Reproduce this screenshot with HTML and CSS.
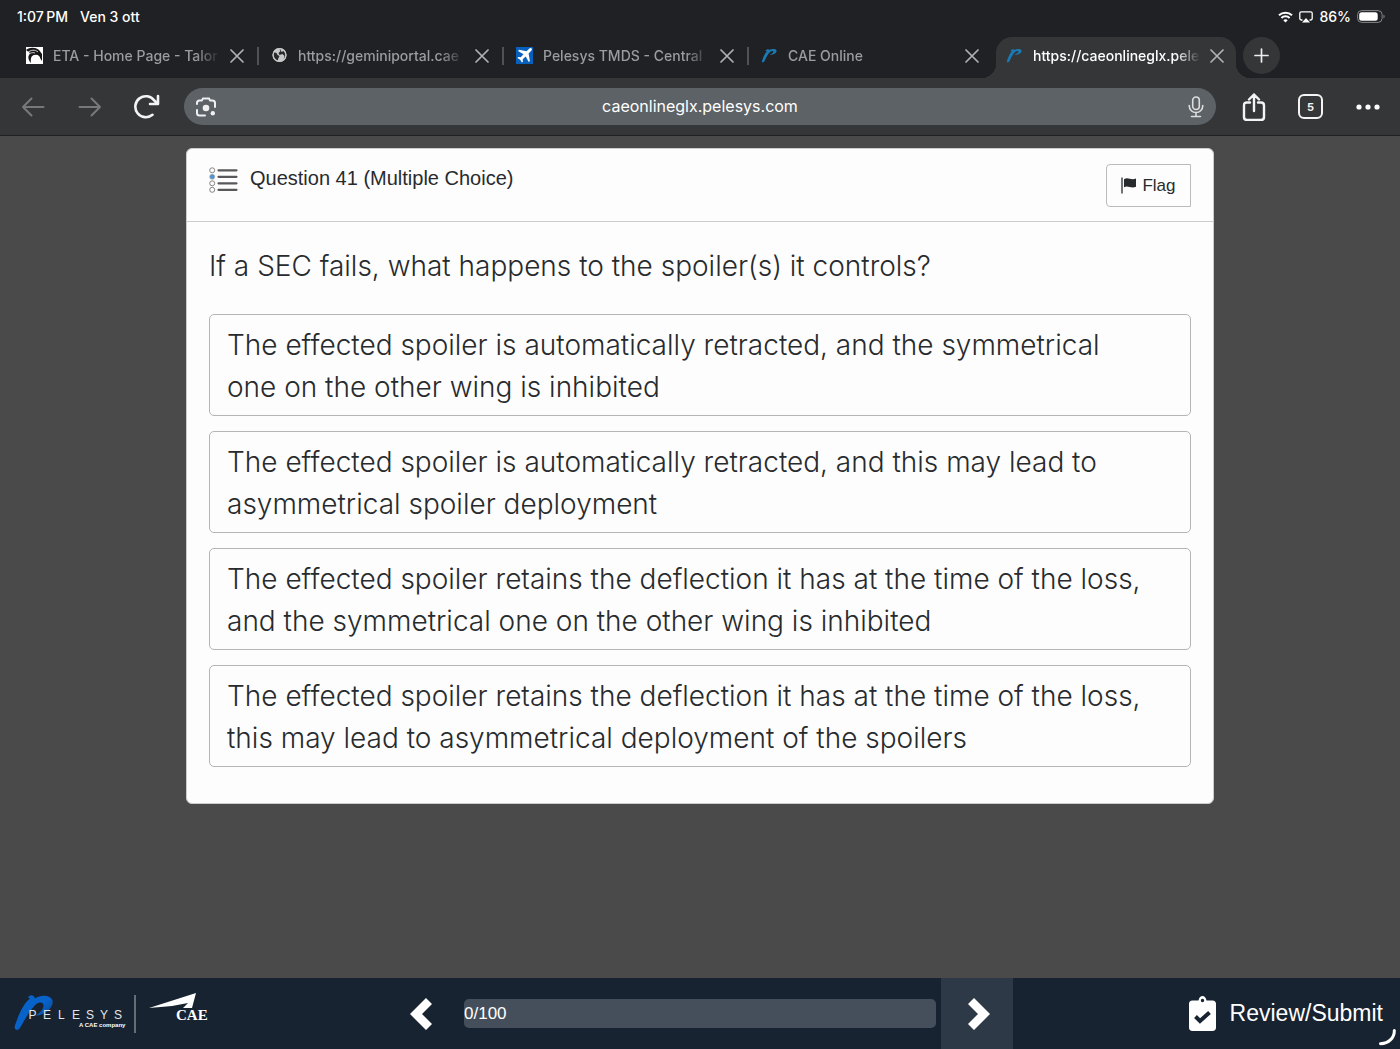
FILE: index.html
```html
<!DOCTYPE html>
<html lang="en">
<head>
<meta charset="utf-8">
<meta name="viewport" content="width=device-width, initial-scale=1">
<title>CAE Online</title>
<link rel="stylesheet" href="styles.css">
</head>
<body>
<svg class="defs" width="0" height="0" aria-hidden="true">
  <symbol id="close" viewBox="0 0 14 14"><path d="M1 1l12 12M13 1L1 13" fill="none" stroke="currentColor" stroke-width="1.7" stroke-linecap="round"/></symbol>
  <symbol id="swoosh" viewBox="0 0 18 18"><path d="M.8 15.500C2 11.500 3.800 7 6.300 4.500l-1.800-.3C6 2 8.500 2 9 3.200 11.500 1.700 16.400 1.500 16.500 4.200c0 2.700-4.500 4.500-8 4 2.800-.8 4.800-2.300 4.600-3.400-.4-1-2.200-.4-3.600.6C7.300 7.500 5.400 11.500 4 14.600c-.6 1.500-2.700 2.300-3.200.9z" fill="#1b79b3"/></symbol>
</svg>

<header class="browser">
  <div class="status">
    <span>1:07&#8201;PM</span>
    <span>Ven 3 ott</span>
    <div class="status-right">
      <svg width="15" height="12" viewBox="0 0 15 12" aria-hidden="true"><g fill="none" stroke="#fff" stroke-width="2"><path d="M1 4.300a9.300 9.300 0 0 1 13 0"/><path d="M3.400 7a5.800 5.800 0 0 1 8.200 0"/></g><path d="M7.500 11.500L5.300 9.200a3.200 3.200 0 0 1 4.400 0z" fill="#fff"/></svg>
      <svg width="14" height="12" viewBox="0 0 14 12" aria-hidden="true"><path d="M3.500 9H2.200C1.300 9 .8 8.500.8 7.600V2.200C.8 1.300 1.300.8 2.200.8h9.600c.9 0 1.400.5 1.400 1.400v5.400c0 .9-.5 1.400-1.400 1.400h-1.300" fill="none" stroke="#fff" stroke-width="1.300"/><path d="M7 7l4 4.600H3z" fill="#fff"/></svg>
      <span>86%</span>
      <svg width="28" height="13" viewBox="0 0 28 13" aria-hidden="true"><rect x=".6" y=".6" width="24.500" height="11.800" rx="4" fill="none" stroke="#85868a"/><rect x="2.200" y="2.200" width="18.500" height="8.600" rx="2.500" fill="#fff"/><path d="M26.500 4.500c1.500.6 1.500 3.400 0 4z" fill="#85868a"/></svg>
    </div>
  </div>

  <nav class="tabs" aria-label="Open tabs">
    <div class="tab">
      <svg width="17" height="17" viewBox="0 0 17 17" aria-hidden="true"><path fill="#fff" d="M0 0h17v17H0z"/><path d="M0 3C4 0 9 0 13 3l3 4v7l-1.500-2C13.500 9 11 7.500 8 8c-3 .8-3.500 4-3 8C2 13 1.500 9 4 6z" fill="#151515"/><path d="M1 6c4-3.500 8-3.500 11-1M1.500 9.500C3 6 6 5 9 6" fill="none" stroke="#fff" stroke-width=".8"/><circle cx="10" cy="12" r="4.300" fill="#fff"/></svg>
      <a href="#">ETA - Home Page - Talor</a>
      <button type="button" aria-label="Close tab"><svg width="14" height="14"><use href="#close"/></svg></button>
    </div>
    <div class="tab">
      <svg width="17" height="17" viewBox="0 0 17 17" aria-hidden="true"><circle cx="8.500" cy="8" r="7" fill="#c8c9cb"/><path d="M2.500 5l3 1 1 2 2 1-1 2-1 3c-3-1-5-5-4-9zM8.500 2l1 2-2 2 1 2 3-1 2 2-1 4c3-2 3-7 0-9l-2 1-1-3z" fill="#28292c"/><circle cx="8.500" cy="8" r="6.400" fill="none" stroke="#c8c9cb" stroke-width="1.300"/></svg>
      <a href="#">https://geminiportal.cae</a>
      <button type="button" aria-label="Close tab"><svg width="14" height="14"><use href="#close"/></svg></button>
    </div>
    <div class="tab">
      <svg width="17" height="17" viewBox="0 0 17 17" aria-hidden="true"><path fill="#0860bd" d="M0 0h17v17H0z"/><path d="M15.500 1.400c-.7-.6-1.800-.2-2.600.6l-2.400 2.300-7.300-1.500L2 4l5.500 3.200-2.800 3-2.400-.2-.9.900 2.800 1.800 1.700 2.900 1-.9-.2-2.500 3-2.700 3 5.600 1.200-1.200-1.300-7.400L15 4.100c.8-.9 1.200-2 .5-2.700z" fill="#fff"/></svg>
      <a href="#">Pelesys TMDS - Central</a>
      <button type="button" aria-label="Close tab"><svg width="14" height="14"><use href="#close"/></svg></button>
    </div>
    <div class="tab last">
      <svg width="17" height="17" aria-hidden="true"><use href="#swoosh"/></svg>
      <a href="#">CAE Online</a>
      <button type="button" aria-label="Close tab"><svg width="14" height="14"><use href="#close"/></svg></button>
    </div>
    <div class="tab active">
      <svg width="17" height="17" aria-hidden="true"><use href="#swoosh"/></svg>
      <a href="#" aria-current="page">https://caeonlineglx.pele</a>
      <button type="button" aria-label="Close tab"><svg width="14" height="14"><use href="#close"/></svg></button>
    </div>
    <button class="new-tab" type="button" aria-label="New tab"><svg width="15" height="15" viewBox="0 0 15 15"><path d="M7.500 1v13M1 7.500h13" stroke="#eee" stroke-width="1.700" stroke-linecap="round"/></svg></button>
  </nav>

  <div class="toolbar">
    <button class="tool dim" type="button" aria-label="Back"><svg width="24" height="20" viewBox="0 0 24 20"><path d="M22.500 10H2M10.500 1.500L2 10l8.500 8.500"/></svg></button>
    <button class="tool dim" type="button" aria-label="Forward"><svg width="24" height="20" viewBox="0 0 24 20"><path d="M1.500 10H22M13.500 1.500L22 10l-8.500 8.500"/></svg></button>
    <button class="tool reload" type="button" aria-label="Reload"><svg width="26" height="26" viewBox="0 0 26 26"><path d="M18.500 20.800A10.500 10.500 0 1 1 20.300 6.500L23.500 9.500M24 2v8h-8"/></svg></button>
    <div class="address">
      <svg width="20" height="20" viewBox="0 0 20 20" aria-hidden="true"><path d="M1 7V6c0-1.500 1-2.500 2.500-2.500h2.300L7 1.500h6l1.200 2h2.300C18 3.500 19 4.500 19 6v4M1 13v3c0 1.500 1 2.500 2.500 2.500H9" fill="none" stroke="#f0f0f0" stroke-width="2" stroke-linecap="round"/><circle cx="10" cy="11" r="3.300" fill="#f0f0f0"/><circle cx="16.800" cy="16.300" r="2.200" fill="#f0f0f0"/></svg>
      <input type="text" aria-label="Address" value="caeonlineglx.pelesys.com">
      <svg width="16" height="22" viewBox="0 0 16 22" aria-hidden="true"><g fill="none" stroke="#ddd" stroke-width="1.600" stroke-linecap="round"><rect x="4.700" y="1" width="6.600" height="12.500" rx="3.300"/><path d="M1.200 9.500c0 9.300 13.600 9.300 13.600 0M8 16.500V20M3.500 20.500h9"/></g></svg>
    </div>
    <button class="tool" type="button" aria-label="Share"><svg width="24" height="28" viewBox="0 0 24 28"><path d="M8 9.500H5C3 9.500 2 10.500 2 12.500V24c0 2 1 3 3 3h14c2 0 3-1 3-3V12.500c0-2-1-3-3-3h-3M12 18V1.500M7 6.500l5-5 5 5"/></svg></button>
    <button class="tool" type="button" aria-label="Tabs"><span class="count">5</span></button>
    <button class="tool" type="button" aria-label="More"><svg class="dots" width="24" height="6" viewBox="0 0 24 6"><circle cx="3" cy="3" r="2.600"/><circle cx="12" cy="3" r="2.600"/><circle cx="21" cy="3" r="2.600"/></svg></button>
  </div>
</header>

<main>
  <section class="card">
    <header class="card-head">
      <svg width="29" height="26" viewBox="0 0 29 26" aria-hidden="true"><g stroke="#58585a" stroke-width="2.200" stroke-linecap="round"><path d="M9.500 3.300h18M9.500 9.800h18M9.500 16.300h18M9.500 22.800h18"/></g><circle cx="3.200" cy="9.800" r="2.300" fill="#4b95dd"/><g fill="none" stroke="#777" stroke-width=".9"><circle cx="3.200" cy="3.300" r="2.500"/><circle cx="3.200" cy="9.800" r="2.500" stroke-opacity=".6"/><circle cx="3.200" cy="16.300" r="2.500"/><circle cx="3.200" cy="22.800" r="2.500"/></g></svg>
      <h1>Question 41 (Multiple Choice)</h1>
      <button class="flag" type="button"><svg width="15" height="17" viewBox="0 0 15 17" aria-hidden="true"><path d="M1 .5v16" stroke="#282b2d" stroke-width="1.300"/><path d="M3 2.300c4-2.800 6.500 1.300 12-.7v8.200c-5 2.200-8-1.600-12 .4z" fill="#282b2d"/></svg>Flag</button>
    </header>
    <div class="card-body">
      <h2>If a SEC fails, what happens to the spoiler(s) it controls?</h2>
      <div class="answers">
        <button type="button">The effected spoiler is automatically retracted, and the symmetrical one on the other wing is inhibited</button>
        <button type="button">The effected spoiler is automatically retracted, and this may lead to asymmetrical spoiler deployment</button>
        <button type="button">The effected spoiler retains the deflection it has at the time of the loss, and the symmetrical one on the other wing is inhibited</button>
        <button type="button">The effected spoiler retains the deflection it has at the time of the loss, this may lead to asymmetrical deployment of the spoilers</button>
      </div>
    </div>
  </section>
</main>

<footer>
  <div class="brand">
    <svg width="210" height="50" viewBox="0 0 210 50" role="img" aria-label="Pelesys, a CAE company">
      <defs><linearGradient id="blue" x1="0" y1="0" x2="1" y2="1"><stop offset="0" stop-color="#0762ca"/><stop offset=".5" stop-color="#0762ca"/><stop offset=".9" stop-color="#123c70"/></linearGradient></defs>
      <path d="M14.500 38C18 27 23 15 30 9.500L28 8.500C30 5 34 6 35 9.500 41 5 51 6 52.500 11.500c1.500 8-9 15.500-17 15 6-3 9.500-9 7.500-12-2-2.500-7-.5-10 4-6 7-9 14-13 20.500-2 3-5 2.500-5.500-1z" fill="url(#blue)"/>
      <g class="letters"><text x="28.500" y="30">P</text><text x="43" y="30">E</text><text x="58" y="30">L</text><text x="72" y="30">E</text><text x="86" y="30">S</text><text x="100" y="30">Y</text><text x="114" y="30">S</text></g>
      <text class="tagline" x="79" y="38">A CAE company</text>
      <path d="M135 6v38" stroke="#81878e" stroke-width="1.500"/>
      <path d="M149 19l47-15-4 15h-9l5-5-16 3z" fill="#fff"/>
      <text class="cae" x="176" y="31">CAE</text>
    </svg>
  </div>
  <nav class="pager" aria-label="Question navigation">
    <button class="prev" type="button" aria-label="Previous"><svg width="22" height="32" viewBox="0 0 22 32"><path d="M16 0l6 6-10 10 10 10-6 6L0 16z"/></svg></button>
    <div class="progress" role="progressbar" aria-label="Answered" aria-valuenow="0" aria-valuemax="100">0/100</div>
    <button class="next" type="button" aria-label="Next"><svg width="22" height="32" viewBox="0 0 22 32"><path d="M6 0L0 6l10 10L0 26l6 6 16-16z"/></svg></button>
  </nav>
  <button class="review" type="button"><svg width="27" height="35" viewBox="0 0 27 35" aria-hidden="true"><path fill-rule="evenodd" d="M3.500 4.500h6C10 1.500 11.500 0 13.500 0s3.500 1.500 4 4.500h6c2.300 0 3.500 1.200 3.500 3.500v23.500c0 2.300-1.200 3.500-3.500 3.500h-20C1.200 35 0 33.800 0 31.500V8c0-2.300 1.200-3.500 3.500-3.500zM13.500 2.800a1.700 1.700 0 1 0 0 3.400 1.700 1.700 0 0 0 0-3.400z" fill="#fff"/><path d="M6.500 20.500l4.500 4.500 9.500-8.500" fill="none" stroke="#172331" stroke-width="4"/></svg>Review/Submit</button>
  <svg class="spinner" width="17" height="17" viewBox="0 0 17 17" aria-hidden="true"><path d="M15.300 1.500C15.500 8.500 10 14.500 1.500 14.700" fill="none" stroke="#fff" stroke-width="3" stroke-linecap="round"/></svg>
</footer>
</body>
</html>
```
FILE: styles.css
```css
* { box-sizing: border-box; }

body {
  margin: 0;
  min-height: 100vh;
  display: flex;
  flex-direction: column;
  background: #4a4a4a;
  color: #282b2d;
  font-family: "Liberation Sans", Arial, sans-serif;
}

button, input { font: inherit; color: inherit; border: 0; background: none; padding: 0; }
button { cursor: pointer; }
a { color: inherit; text-decoration: none; }
svg { display: block; flex: none; }
.defs { position: absolute; }

/* Browser chrome */
.browser {
  background: #202124;
  border-bottom: 1px solid #202124;
  font-family: Inter, sans-serif;
}

.status {
  display: flex;
  align-items: center;
  gap: 12px;
  height: 37px;
  padding: 0 17px 4px;
  color: #fff;
  font-size: 14px;
  font-weight: 500;
}

.status-right {
  display: flex;
  align-items: center;
  gap: 6px;
  margin: 0 -2px 0 auto;
}

.tabs { display: flex; height: 41px; padding-left: 14px; }

.tab {
  position: relative;
  display: flex;
  align-items: center;
  flex: 0 1 245px;
  min-width: 0;
  padding: 0 15px 4px 12px;
  color: #9b9c9f;
  font-size: 14px;
  font-weight: 500;
}

.tab a {
  flex: 1;
  min-width: 0;
  margin: 0 10px;
  overflow: hidden;
  white-space: nowrap;
  line-height: 20px;
  mask-image: linear-gradient(to right, #000 calc(100% - 24px), transparent);
}

.tab button { color: #b0b1b4; }

.tab::after {
  content: "";
  position: absolute;
  right: 0;
  top: 10px;
  width: 2px;
  height: 18px;
  background: #505356;
}

.tab.last::after { display: none; }

.tab.active {
  z-index: 0;
  color: #fff;
}

.tab.active::before {
  content: "";
  position: absolute;
  z-index: -1;
  inset: 0 3px 0 2px;
  border-radius: 16px 16px 0 0;
  background: #353638;
}

.tab.active::after {
  z-index: -1;
  inset: auto -11px 0 -12px;
  width: auto;
  height: 14px;
  background:
    radial-gradient(circle at 0 0, transparent 14px, #353638 14px) left / 14px 14px no-repeat,
    radial-gradient(circle at 100% 0, transparent 14px, #353638 14px) right / 14px 14px no-repeat;
}

.new-tab {
  position: relative;
  display: grid;
  place-items: center;
  width: 37px;
  height: 37px;
  margin-left: 4px;
  border-radius: 50%;
  background: #353638;
}

.toolbar {
  display: flex;
  align-items: center;
  height: 57px;
  padding: 0 4px;
  background: #353638;
}

.tool {
  display: grid;
  place-items: center;
  width: 57px;
  height: 40px;
}

.tool svg {
  fill: none;
  stroke: #f4f4f4;
  stroke-width: 2.4;
  stroke-linecap: round;
  stroke-linejoin: round;
}

.dim svg { stroke: #77787a; stroke-width: 2; }
.reload svg { stroke-width: 2.6; }
.tool .dots { fill: #fff; stroke: none; }

.count {
  display: grid;
  place-items: center;
  width: 25px;
  height: 25px;
  border: 2px solid #f4f4f4;
  border-radius: 6px;
  color: #f4f4f4;
  font-size: 11px;
  font-weight: 700;
}

.address {
  display: flex;
  align-items: center;
  flex: 1;
  height: 37px;
  margin: 0 9px;
  padding: 0 12px;
  border-radius: 19px;
  background: #5d6266;
}

.address input {
  flex: 1;
  min-width: 0;
  padding: 0 4px 2px 0;
  color: #fff;
  font-size: 16px;
  text-align: center;
}

/* Question card */
main { flex: 1; padding: 12px 16px; }

.card {
  max-width: 1028px;
  margin: 0 auto;
  border: 1px solid #ccc;
  border-radius: 6px;
  background: #fdfdfd;
}

.card-head {
  display: flex;
  align-items: flex-start;
  gap: 12px;
  padding: 15px 22px 14px;
  border-bottom: 1px solid #ccc;
}

.card-head > svg { margin-top: 3px; }

h1 {
  margin: 2px 0 0;
  font-size: 20px;
  font-weight: 400;
  line-height: 24px;
}

.flag {
  display: flex;
  align-items: center;
  justify-content: center;
  gap: 6px;
  width: 85px;
  height: 43px;
  margin-left: auto;
  border: 1px solid #bbb;
  border-radius: 4px 0 0 4px;
  font-size: 17px;
}

.card-body { padding: 23px 22px 36px; }

h2, .answers button {
  font-family: Inter, "Liberation Sans", sans-serif;
  font-size: 28px;
  font-weight: 300;
  line-height: 42px;
}

h2 { margin: 0 0 27px; }

.answers { display: flex; flex-direction: column; gap: 15px; }

.answers button {
  padding: 9px 40px 7px 17px;
  border: 1px solid #b5b5b5;
  border-radius: 5px;
  text-align: left;
}

/* Bottom bar */
footer {
  position: relative;
  display: grid;
  grid-template-columns: 1fr minmax(auto, 626px) 1fr;
  align-items: center;
  height: 71px;
  background: #172331;
  color: #fff;
}

.letters { fill: #e4e7ea; font-size: 12px; }
.tagline { fill: #fff; font-size: 6px; font-weight: 700; }
.cae { fill: #fff; font-family: "Liberation Serif", serif; font-size: 15px; font-weight: 700; }

.pager { display: flex; align-items: center; gap: 5px; height: 100%; }

.pager button {
  display: grid;
  place-items: center;
  width: 72px;
  height: 100%;
  fill: #fff;
}

.pager .prev { padding-right: 4px; }
.pager .next { background: #2e3947; padding-left: 4px; }

.progress {
  flex: 1;
  height: 29px;
  border-radius: 5px;
  background: #454f5b;
  font-size: 17px;
  line-height: 29px;
}

.review {
  display: flex;
  align-items: center;
  justify-self: end;
  gap: 14px;
  margin-right: 17px;
  font-size: 23px;
}

.spinner { position: absolute; right: 4px; bottom: 3px; }
```
